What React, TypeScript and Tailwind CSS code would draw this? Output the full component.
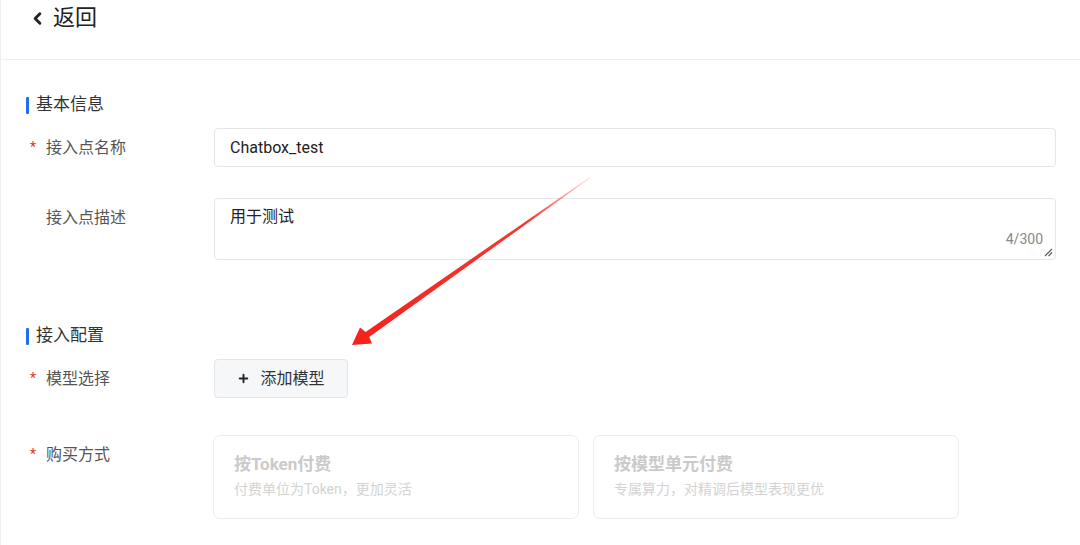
import { ChevronLeft, Plus } from 'lucide-react';

const font = { fontFamily: 'Roboto, "Noto Sans CJK SC", sans-serif' };

function SectionTitle({ title }: { title: string }) {
  return (
    <div className="flex items-center h-[22px]">
      <span className="w-[3px] h-[17px] rounded-[1px] bg-[#1f6ff2]" />
      <span className="ml-[7px] text-[17px] text-[#333]">{title}</span>
    </div>
  );
}

function Label({ text, required }: { text: string; required?: boolean }) {
  return (
    <div className="w-[188px] shrink-0 h-[39px] flex items-center">
      <span className="w-[20px] pl-[4px] text-[14px] text-[#e0362c]">{required ? '*' : ''}</span>
      <span className="text-[16px] text-[#555]">{text}</span>
    </div>
  );
}

const plans = [
  { title: '按Token付费', desc: '付费单位为Token，更加灵活' },
  { title: '按模型单元付费', desc: '专属算力，对精调后模型表现更优' },
];

function Arrow() {
  return (
    <svg className="absolute left-0 top-0 pointer-events-none" width="1080" height="545">
      <defs>
        <linearGradient id="fade" x1="588" y1="178" x2="351" y2="345" gradientUnits="userSpaceOnUse">
          <stop offset="0" stopColor="#f5221b" stopOpacity="0.15" />
          <stop offset="0.25" stopColor="#f5221b" stopOpacity="0.9" />
          <stop offset="1" stopColor="#f5221b" />
        </linearGradient>
      </defs>
      <polygon
        points="351,345 359,327.5 364.6,331.9 588.2,177.6 588.7,178.3 368.2,337.1 371,343.5"
        fill="url(#fade)"
      />
    </svg>
  );
}

export default function App() {
  return (
    <div className="relative w-[1080px] h-[545px] bg-white border-l border-[#eeeeee] overflow-hidden" style={font}>
      <div className="h-[60px] border-b border-[#efefef] flex items-start pl-[27px] pt-[5px]">
        <div className="h-[26px] flex items-center">
          <ChevronLeft className="w-[19px] h-[19px] text-[#222]" strokeWidth={3.6} />
          <span className="ml-[6px] text-[22px] leading-[26px] text-[#222]">返回</span>
        </div>
      </div>

      <div className="pl-[25px] pr-[24px] flex flex-col">
        <div className="mt-[34px]">
          <SectionTitle title="基本信息" />
        </div>

        <div className="mt-[12px] flex">
          <Label text="接入点名称" required />
          <div className="flex-1 h-[39px] border border-[#e6e6e6] rounded-[4px] flex items-center px-[15px] text-[16px] text-[#222]">
            Chatbox_test
          </div>
        </div>

        <div className="mt-[31px] flex">
          <Label text="接入点描述" />
          <div className="relative flex-1 h-[62px] border border-[#e6e6e6] rounded-[4px] px-[15px] pt-[6px] text-[16px] text-[#222]">
            用于测试
            <span className="absolute right-[12px] bottom-[9px] text-[14px] text-[#888]">4/300</span>
            <svg className="absolute right-[2px] bottom-[2px]" width="9" height="9" viewBox="0 0 9 9">
              <path d="M1 8 L8 1 M4.5 8 L8 4.5" stroke="#555" strokeWidth="1.1" />
            </svg>
          </div>
        </div>

        <div className="mt-[65px]">
          <SectionTitle title="接入配置" />
        </div>

        <div className="mt-[12px] flex">
          <Label text="模型选择" required />
          <button className="h-[39px] w-[134px] border border-[#e3e5ea] rounded-[4px] bg-[#f6f7f9] flex items-center justify-center gap-[10px] text-[16px] text-[#333]">
            <Plus className="w-[13px] h-[13px] text-[#222]" strokeWidth={3.5} />
            添加模型
          </button>
        </div>

        <div className="mt-[37px] flex">
          <Label text="购买方式" required />
          <div className="flex gap-[14px] -ml-[1px]">
            {plans.map((p) => (
              <div key={p.title} className="w-[366px] h-[84px] border border-[#ececec] rounded-[7px] pl-[20px] pt-[17px]">
                <div className="text-[17px] font-bold text-[#cacaca] leading-[22px]">{p.title}</div>
                <div className="mt-[4px] text-[14px] text-[#d3d3d3] leading-[20px]">{p.desc}</div>
              </div>
            ))}
          </div>
        </div>
      </div>

      <Arrow />
    </div>
  );
}
